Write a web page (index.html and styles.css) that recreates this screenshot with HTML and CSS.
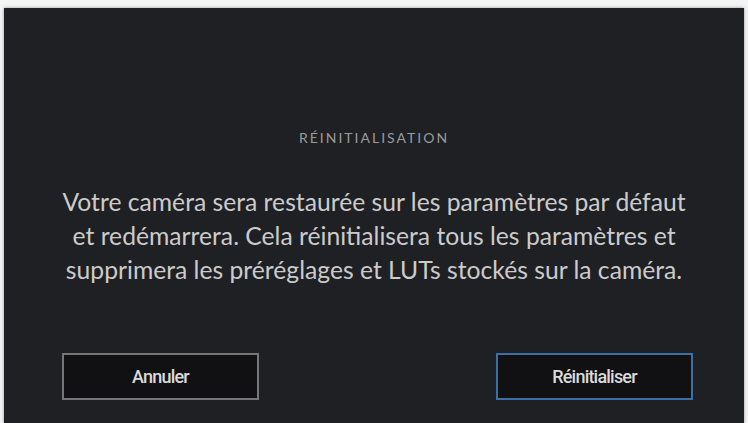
FILE: index.html
```html
<!DOCTYPE html>
<html>
	<head>
		<title>Réinitialisation</title>
		<link rel="stylesheet" href="styles.css">
	</head>
	<body>
		<div class="panel">
			<div class="message">
				<div class="title">RÉINITIALISATION</div>
				<p class="text">Votre caméra sera restaurée sur les paramètres par défaut<br>et redémarrera. Cela réinitialisera tous les paramètres et<br>supprimera les préréglages et LUTs stockés sur la caméra.</p>
			</div>
			<div class="buttons">
				<button class="btn">Annuler</button>
				<button class="btn primary">Réinitialiser</button>
			</div>
		</div>
	</body>
</html>
```

FILE: styles.css
```css
* {
	box-sizing: border-box;
}
html,body {
	width: 100%;
	height: 100%;
}
body {
	margin: 0;
	background-color: #f4f4f4;
	padding: 8px 4px 0 4px;
	overflow: hidden;
}
.panel {
	height: 100%;
	background-color: #1f2023;
	display: flex;
	flex-direction: column;
	box-shadow: 0 0 3px rgba(0,0,0,0.4);
}
.message {
	flex: 1;
	display: flex;
	flex-direction: column;
	align-items: center;
	padding-top: 121px;
}
.title {
	font-family: Lato, "Open Sans", sans-serif;
	font-size: 14px;
	letter-spacing: 2px;
	color: #9a9a9c;
}
.text {
	margin: 39px 0 0 0;
	font-family: Lato, "Open Sans", sans-serif;
	font-size: 24.7px;
	line-height: 34px;
	color: #cbcbcc;
	text-align: center;
}
.buttons {
	display: flex;
	justify-content: space-between;
	padding: 0 51px 23px 58px;
}
.btn {
	width: 197px;
	height: 47px;
	background-color: #111113;
	border: 2px solid #75757a;
	color: #dadada;
	font-family: Roboto, sans-serif;
	font-size: 18px;
	font-weight: 500;
	letter-spacing: -0.8px;
}
.btn.primary {
	border-color: #3c6fa6;
}
```
